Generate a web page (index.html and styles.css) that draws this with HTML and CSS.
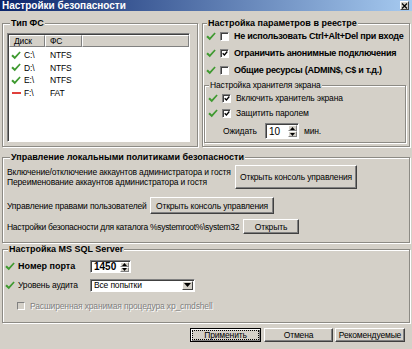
FILE: index.html
```html
<html><head>
  <meta charset="UTF-8">
  <title>Настройки безопасности</title>
  <link rel="stylesheet" href="styles.css">
</head>
<body>
  <div class="window">
    <div class="titlebar">
      <span class="title">Настройки безопасности</span>
      <span class="close-btn">
        <svg viewBox="0 0 7 6" width="7" height="6"><path d="M1 0.5 L6 5.5 M6 0.5 L1 5.5" stroke="#000" stroke-width="1.2"/></svg>
      </span>
    </div>

    <div class="dialog-body">
      <div class="top-row">
        <fieldset class="group fs-group">
          <legend>Тип ФС</legend>
          <div class="listview">
            <div class="lv-head">
              <div class="lv-col col-disk">Диск</div>
              <div class="lv-col col-fs">ФС</div>
              <div class="lv-col col-rest"></div>
            </div>
            <div class="lv-rows">
              <div class="lv-row">
                <span class="lv-ico"><svg class="ok" viewBox="0 0 10 9" width="10" height="9"><path d="M0.3 5 L1.8 3.4 L3.8 5.4 L8.5 0.4 L9.7 1.6 L3.8 8.2 Z" fill="#3f9a30"/></svg></span>
                <span class="lv-disk">C:\</span><span>NTFS</span>
              </div>
              <div class="lv-row">
                <span class="lv-ico"><svg class="ok" viewBox="0 0 10 9" width="10" height="9"><path d="M0.3 5 L1.8 3.4 L3.8 5.4 L8.5 0.4 L9.7 1.6 L3.8 8.2 Z" fill="#3f9a30"/></svg></span>
                <span class="lv-disk">D:\</span><span>NTFS</span>
              </div>
              <div class="lv-row">
                <span class="lv-ico"><svg class="ok" viewBox="0 0 10 9" width="10" height="9"><path d="M0.3 5 L1.8 3.4 L3.8 5.4 L8.5 0.4 L9.7 1.6 L3.8 8.2 Z" fill="#3f9a30"/></svg></span>
                <span class="lv-disk">E:\</span><span>NTFS</span>
              </div>
              <div class="lv-row">
                <span class="lv-ico"><span class="dash"></span></span>
                <span class="lv-disk">F:\</span><span>FAT</span>
              </div>
            </div>
          </div>
        </fieldset>

        <fieldset class="group reg-group">
          <legend>Настройка параметров в реестре</legend>
          <div class="opt bold">
            <svg class="ok" viewBox="0 0 10 9" width="10" height="9"><path d="M0.3 5 L1.8 3.4 L3.8 5.4 L8.5 0.4 L9.7 1.6 L3.8 8.2 Z" fill="#3f9a30"/></svg>
            <span class="cb"></span>
            <span>Не использовать Ctrl+Alt+Del при входе</span>
          </div>
          <div class="opt bold">
            <svg class="ok" viewBox="0 0 10 9" width="10" height="9"><path d="M0.3 5 L1.8 3.4 L3.8 5.4 L8.5 0.4 L9.7 1.6 L3.8 8.2 Z" fill="#3f9a30"/></svg>
            <span class="cb checked"><svg viewBox="0 0 7 7" width="7" height="7"><path d="M0.8 3.2 L2.8 5.2 L6.2 1.2" stroke="#000" stroke-width="1.5" fill="none"/></svg></span>
            <span>Ограничить анонимные подключения</span>
          </div>
          <div class="opt bold">
            <svg class="ok" viewBox="0 0 10 9" width="10" height="9"><path d="M0.3 5 L1.8 3.4 L3.8 5.4 L8.5 0.4 L9.7 1.6 L3.8 8.2 Z" fill="#3f9a30"/></svg>
            <span class="cb"></span>
            <span>Общие ресурсы (ADMIN$, C$ и т.д.)</span>
          </div>

          <fieldset class="group sub-group">
            <legend>Настройка хранителя экрана</legend>
            <div class="opt">
              <svg class="ok" viewBox="0 0 10 9" width="10" height="9"><path d="M0.3 5 L1.8 3.4 L3.8 5.4 L8.5 0.4 L9.7 1.6 L3.8 8.2 Z" fill="#3f9a30"/></svg>
              <span class="cb checked"><svg viewBox="0 0 7 7" width="7" height="7"><path d="M0.8 3.2 L2.8 5.2 L6.2 1.2" stroke="#000" stroke-width="1.5" fill="none"/></svg></span>
              <span>Включить хранитель экрана</span>
            </div>
            <div class="opt">
              <svg class="ok" viewBox="0 0 10 9" width="10" height="9"><path d="M0.3 5 L1.8 3.4 L3.8 5.4 L8.5 0.4 L9.7 1.6 L3.8 8.2 Z" fill="#3f9a30"/></svg>
              <span class="cb checked"><svg viewBox="0 0 7 7" width="7" height="7"><path d="M0.8 3.2 L2.8 5.2 L6.2 1.2" stroke="#000" stroke-width="1.5" fill="none"/></svg></span>
              <span>Защитить паролем</span>
            </div>
            <div class="wait-row">
              <span class="wait-label">Ожидать</span>
              <span class="spin spin-wait">
                <span class="spin-val">10</span>
                <span class="spin-btns">
                  <span class="spin-up"><svg viewBox="0 0 5 3" width="5" height="3"><path d="M0 3 L2.5 0 L5 3 Z" fill="#000"/></svg></span>
                  <span class="spin-down"><svg viewBox="0 0 5 3" width="5" height="3"><path d="M0 0 L2.5 3 L5 0 Z" fill="#000"/></svg></span>
                </span>
              </span>
              <span class="wait-unit">мин.</span>
            </div>
          </fieldset>
        </fieldset>
      </div>

      <fieldset class="group policy-group">
        <legend>Управление локальными политиками безопасности</legend>
        <div class="pol-row pol-accounts">
          <div class="pol-text lbl-accounts">
            <div>Включение/отключение аккаунтов администратора и гостя</div>
            <div>Переименование аккаунтов администратора и гостя</div>
          </div>
          <button class="btn btn-console">Открыть консоль управления</button>
        </div>
        <div class="pol-row pol-rights">
          <div class="pol-text lbl-rights">Управление правами пользователей</div>
          <button class="btn btn-rights">Открыть консоль управления</button>
        </div>
        <div class="pol-row pol-dir">
          <div class="pol-text lbl-dir">Настройки безопасности для каталога %systemroot%\system32</div>
          <button class="btn btn-open">Открыть</button>
        </div>
      </fieldset>

      <fieldset class="group sql-group">
        <legend>Настройка MS SQL Server</legend>
        <div class="sql-row">
          <svg class="ok" viewBox="0 0 10 9" width="10" height="9"><path d="M0.3 5 L1.8 3.4 L3.8 5.4 L8.5 0.4 L9.7 1.6 L3.8 8.2 Z" fill="#3f9a30"/></svg>
          <span class="sql-label bold">Номер порта</span>
          <span class="spin spin-port">
            <span class="spin-val bold">1450</span>
            <span class="spin-btns">
              <span class="spin-up"><svg viewBox="0 0 5 3" width="5" height="3"><path d="M0 3 L2.5 0 L5 3 Z" fill="#000"/></svg></span>
              <span class="spin-down"><svg viewBox="0 0 5 3" width="5" height="3"><path d="M0 0 L2.5 3 L5 0 Z" fill="#000"/></svg></span>
            </span>
          </span>
        </div>
        <div class="sql-row audit-row">
          <svg class="ok" viewBox="0 0 10 9" width="10" height="9"><path d="M0.3 5 L1.8 3.4 L3.8 5.4 L8.5 0.4 L9.7 1.6 L3.8 8.2 Z" fill="#3f9a30"/></svg>
          <span class="sql-label">Уровень аудита</span>
          <span class="combo">
            <span class="combo-val">Все попытки</span>
            <span class="combo-btn"><svg viewBox="0 0 7 4" width="7" height="4"><path d="M0 0 L3.5 4 L7 0 Z" fill="#000"/></svg></span>
          </span>
        </div>
        <div class="sql-row xp-row">
          <span class="cb disabled"></span>
          <span class="disabled-text">Расширенная хранимая процедура xp_cmdshell</span>
        </div>
      </fieldset>

      <div class="dialog-buttons">
        <button class="btn btn-default"><span class="focus">Применить</span></button>
        <button class="btn btn-cancel">Отмена</button>
        <button class="btn btn-recommend">Рекомендуемые</button>
      </div>
    </div>
  </div>
</body>
</html>
```

FILE: styles.css
```css
:root {
  --face: #d4d0c8;
  --shadow: #808080;
  --dark: #404040;
  --light: #ffffff;
}

* {
  box-sizing: border-box;
}

body {
  margin: 0;
  background-color: var(--face);
  font-family: "Liberation Sans", Arial, sans-serif;
  font-size: 8.5px;
  letter-spacing: -0.15px;
  color: #000;
}

.bold {
  font-weight: bold;
}

.window {
  width: 412px;
  height: 349px;
  background-color: var(--face);
  overflow: hidden;
}

/* title bar */
.titlebar {
  height: 11px;
  background: linear-gradient(to right, #0a246a, #a6caf0);
  display: flex;
  align-items: center;
  justify-content: space-between;
  padding: 0 3px 0 2px;
}

.title {
  color: white;
  font-weight: bold;
  font-size: 10px;
  letter-spacing: 0;
  line-height: 11px;
}

.close-btn {
  width: 9px;
  height: 9px;
  background-color: var(--face);
  border: 1px solid;
  border-color: var(--light) var(--dark) var(--dark) var(--light);
  display: flex;
  align-items: center;
  justify-content: center;
}

.dialog-body {
  padding: 7px 2px 0 2px;
}

/* group boxes */
.group {
  margin: 0;
  padding: 0;
  min-width: 0;
  border: 1px solid #8c8a84;
  box-shadow: inset 1px 1px 0 var(--light), 1px 1px 0 var(--light);
}

.group legend {
  padding: 0 1px;
  margin-left: 3px;
  font-weight: bold;
  font-size: 9px;
  letter-spacing: 0;
  line-height: 11px;
  background-color: var(--face);
}

.top-row {
  display: flex;
  gap: 4px;
  height: 129px;
}

.fs-group {
  width: 196px;
  padding: 4px 0 0 4px;
}

.reg-group {
  width: 208px;
  padding: 0 0 0 1px;
}

/* list view */
.listview {
  width: 183px;
  height: 109px;
  background-color: white;
  border: 1px solid;
  border-color: var(--shadow) var(--light) var(--light) var(--shadow);
  box-shadow: inset 1px 1px 0 var(--dark);
  padding: 1px 0 0 1px;
}

.lv-head {
  display: flex;
  height: 12px;
}

.lv-col {
  height: 12px;
  line-height: 10px;
  padding-left: 4px;
  background-color: var(--face);
  border: 1px solid;
  border-color: var(--light) var(--shadow) var(--shadow) var(--light);
}

.col-disk {
  width: 36px;
}

.col-fs {
  width: 37px;
}

.col-rest {
  flex-grow: 1;
}

.lv-rows {
  padding-top: 2px;
}

.lv-row {
  display: flex;
  align-items: center;
  height: 12.6px;
}

.lv-ico {
  width: 15px;
  padding-left: 2px;
  display: flex;
  align-items: center;
}

.lv-disk {
  width: 26px;
}

.dash {
  display: block;
  width: 9px;
  height: 1.5px;
  margin-left: 1px;
  background-color: #e0403c;
}

/* option rows */
.opt {
  display: flex;
  align-items: center;
  height: 14px;
  padding-left: 2px;
  margin-bottom: 3px;
  white-space: nowrap;
}

.opt.bold {
  font-size: 9px;
  letter-spacing: -0.25px;
}

.opt .ok {
  margin-right: 4px;
}

.cb {
  width: 9px;
  height: 9px;
  margin-right: 5px;
  flex-shrink: 0;
  background-color: white;
  border: 1px solid;
  border-color: var(--shadow) var(--light) var(--light) var(--shadow);
  box-shadow: inset 1px 1px 0 var(--dark);
  display: flex;
  align-items: center;
  justify-content: center;
}

.cb svg {
  margin: 1px 0 0 1px;
}

.cb.disabled {
  background-color: var(--face);
}

.sub-group {
  width: 202px;
  margin-top: 1px;
  padding: 0 0 1px 1px;
  height: 63px;
}

.sub-group legend {
  font-weight: normal;
  font-size: 8.5px;
  letter-spacing: -0.15px;
}

.sub-group .opt {
  margin-bottom: 1px;
}

.wait-row {
  display: flex;
  align-items: center;
  margin-top: 3px;
  height: 16px;
}

.wait-label {
  width: 42px;
  padding-left: 17px;
  box-sizing: content-box;
}

.wait-unit {
  margin-left: 5px;
}

/* spin boxes */
.spin {
  display: flex;
  background-color: white;
  border: 1px solid;
  border-color: var(--shadow) var(--light) var(--light) var(--shadow);
  box-shadow: inset 1px 1px 0 var(--dark);
  padding: 1px 1px 1px 3px;
}

.spin-wait {
  width: 34px;
  height: 16px;
}

.spin-port {
  width: 41px;
  height: 13px;
}

.spin-val {
  flex-grow: 1;
  display: flex;
  align-items: center;
  font-size: 10px;
  letter-spacing: 0;
}

.spin-btns {
  width: 9px;
  display: flex;
  flex-direction: column;
}

.spin-up,
.spin-down {
  flex: 1;
  background-color: var(--face);
  border: 1px solid;
  border-color: var(--light) var(--shadow) var(--shadow) var(--light);
  display: flex;
  align-items: center;
  justify-content: center;
}

/* policy group */
.policy-group {
  margin-top: 5px;
  height: 91px;
  padding: 2px 0 0 4px;
}

.pol-row {
  display: flex;
  align-items: center;
  white-space: nowrap;
}

.pol-text {
  line-height: 10px;
}

.lbl-accounts {
  width: 228px;
}

.lbl-rights {
  width: 143px;
}

.lbl-dir {
  width: 236px;
  letter-spacing: -0.3px;
}

.pol-accounts {
  height: 24px;
}

.pol-rights {
  margin-top: 8px;
  height: 17px;
}

.pol-dir {
  margin-top: 5px;
  height: 15px;
}

.btn {
  font-family: inherit;
  font-size: 8.5px;
  letter-spacing: -0.15px;
  color: #000;
  padding: 0;
  background-color: var(--face);
  border: 1px solid;
  border-color: var(--light) var(--dark) var(--dark) var(--light);
  box-shadow: inset -1px -1px 0 var(--shadow);
  white-space: nowrap;
}

.btn-console {
  width: 122px;
  height: 24px;
}

.btn-rights {
  width: 124px;
  height: 17px;
}

.btn-open {
  width: 56px;
  height: 15px;
}

/* sql group */
.sql-group {
  margin-top: 1px;
  height: 79px;
  padding: 4px 0 0 2px;
}

.sql-row {
  display: flex;
  align-items: center;
  height: 14px;
  white-space: nowrap;
}

.sql-row .ok {
  margin-right: 3px;
}

.sql-label {
  width: 72px;
}

.sql-label.bold {
  font-size: 9px;
  letter-spacing: 0;
}

.audit-row {
  margin-top: 5px;
}

.combo {
  width: 105px;
  height: 13px;
  display: flex;
  background-color: white;
  border: 1px solid;
  border-color: var(--shadow) var(--light) var(--light) var(--shadow);
  box-shadow: inset 1px 1px 0 var(--dark);
  padding: 1px;
}

.combo-val {
  flex-grow: 1;
  padding-left: 2px;
  display: flex;
  align-items: center;
}

.combo-btn {
  width: 11px;
  background-color: var(--face);
  border: 1px solid;
  border-color: var(--light) var(--dark) var(--dark) var(--light);
  display: flex;
  align-items: center;
  justify-content: center;
}

.xp-row {
  margin-top: 7px;
  padding-left: 12px;
}

.xp-row .cb {
  width: 8px;
  height: 8px;
  box-shadow: none;
  border-color: var(--shadow) var(--light) var(--light) var(--shadow);
}

.disabled-text {
  color: var(--shadow);
  text-shadow: 1px 1px 0 var(--light);
}

/* dialog buttons */
.dialog-buttons {
  display: flex;
  justify-content: flex-end;
  gap: 2px;
  margin-top: 5px;
  padding-right: 5px;
}

.dialog-buttons .btn {
  height: 14px;
}

.btn-default {
  width: 71px;
  margin-right: 1px;
  border: 1px solid #000;
  box-shadow: inset 1px 1px 0 var(--light), inset -1px -1px 0 var(--shadow);
  padding: 2px;
}

.focus {
  display: block;
  height: 100%;
  line-height: 8px;
  outline: 1px dotted #000;
}

.btn-cancel {
  width: 69px;
}

.btn-recommend {
  width: 70px;
}
```
